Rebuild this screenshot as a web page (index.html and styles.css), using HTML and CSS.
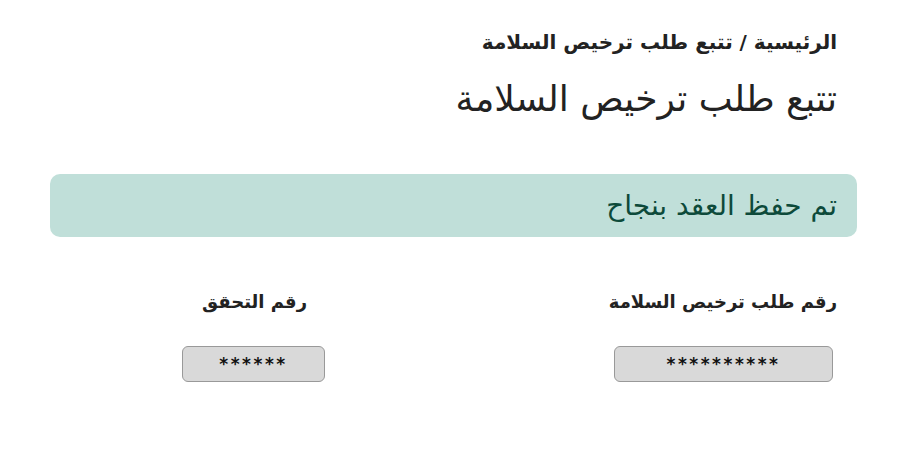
FILE: index.html
```html
<!DOCTYPE html>
<html lang="ar" dir="rtl">
<head>
<meta charset="utf-8">
<link rel="stylesheet" href="styles.css">
</head>
<body>
<main class="page">
  <nav class="crumbs">الرئيسية / تتبع طلب ترخيص السلامة</nav>
  <h1 class="title">تتبع طلب ترخيص السلامة</h1>
  <div class="alert">تم حفظ العقد بنجاح</div>
  <div class="fields">
    <div class="field field-wide">
      <label class="label">رقم طلب ترخيص السلامة</label>
      <div class="input">**********</div>
    </div>
    <div class="field field-narrow">
      <label class="label">رقم التحقق</label>
      <div class="input">******</div>
    </div>
  </div>
</main>
</body>
</html>
```

FILE: styles.css
```css
* { box-sizing: border-box; }
html, body { margin: 0; padding: 0; background: #fff; }
body {
  font-family: "DejaVu Sans", "Noto Sans", sans-serif;
  color: #222;
  width: 900px;
  height: 450px;
  overflow: hidden;
}
.page {
  padding: 28px 63px 0 50px;
}
.crumbs {
  font-size: 20px;
  font-weight: bold;
  color: #222;
  line-height: 28px;
}
.title {
  margin: 20px 0 0 0;
  font-size: 36px;
  font-weight: normal;
  line-height: 46px;
  color: #222;
}
.alert {
  margin: 52px -20px 0 0;
  background: #c0dfd9;
  color: #0d4a3a;
  border-radius: 10px;
  height: 63px;
  display: flex;
  align-items: center;
  padding: 0 20px;
  font-size: 28px;
}
.fields {
  display: flex;
  margin-top: 51px;
}
.field { display: flex; flex-direction: column; }
.field-wide { width: 224px; }
.field-narrow { margin-right: 288px; width: 143px; }
.label {
  font-size: 18px;
  font-weight: bold;
  line-height: 28px;
  color: #222;
  white-space: nowrap;
}
.field-narrow .label { padding-right: 18px; }
.input {
  margin-top: 30px;
  height: 36px;
  background: #d9d9d9;
  border: 1px solid #999;
  border-radius: 6px;
  display: flex;
  align-items: center;
  justify-content: center;
  font-weight: bold;
  font-size: 17px;
  letter-spacing: 2.5px;
  color: #111;
}
.field-wide .input { width: 219px; margin-right: 4px; }
```
